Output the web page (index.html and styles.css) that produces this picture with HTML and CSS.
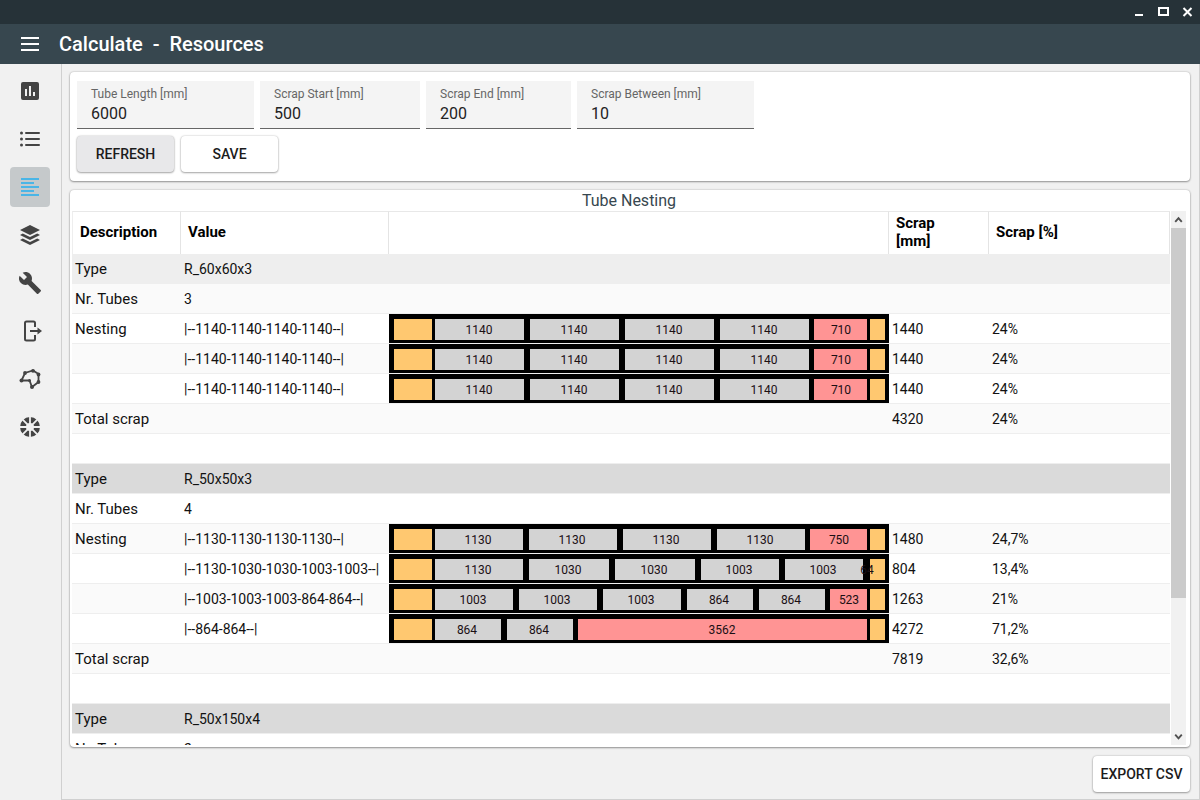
FILE: index.html
```html
<!DOCTYPE html>
<html lang="en">
<head>
<meta charset="utf-8">
<title>Calculate - Resources</title>
<link rel="stylesheet" href="styles.css">
</head>
<body>
<div class="app">
  <div class="titlebar">
    <button class="win-btn" aria-label="Minimize"><svg viewBox="0 0 12 12"><path d="M1 9h8" stroke="#fff" stroke-width="2"/></svg></button>
    <button class="win-btn" aria-label="Maximize"><svg viewBox="0 0 12 12"><path d="M1 2h9v7h-9z" fill="none" stroke="#fff" stroke-width="2"/></svg></button>
    <button class="win-btn" aria-label="Close"><svg viewBox="0 0 12 12"><path d="M1.500 2l8 8M9.500 2l-8 8" stroke="#fff" stroke-width="2"/></svg></button>
  </div>
  <header class="appbar">
    <button class="menu-btn" aria-label="Menu"><svg viewBox="0 0 24 24"><path d="M3 6h18M3 12h18M3 18h18" stroke="#fff" stroke-width="2"/></svg></button>
    <h1 class="page-title">Calculate  -  Resources</h1>
  </header>
  <div class="body">
    <nav class="sidebar">
      <a class="nav-item" href="#charts" aria-label="Charts"><svg viewBox="0 0 24 24"><path fill-rule="evenodd" d="M5 3h14a2 2 0 0 1 2 2v14a2 2 0 0 1-2 2H5a2 2 0 0 1-2-2V5a2 2 0 0 1 2-2zM7 10v7h2v-7zM11 7v10h2V7zM15 13v4h2v-4z"/></svg></a>
      <a class="nav-item" href="#list" aria-label="List"><svg viewBox="0 0 24 24"><path d="M8 6h13M8 12h13M8 18h13" stroke="#444" stroke-width="2" stroke-linecap="round"/><circle cx="3.500" cy="6" r="1.500"/><circle cx="3.500" cy="12" r="1.500"/><circle cx="3.500" cy="18" r="1.500"/></svg></a>
      <a class="nav-item active" href="#resources" aria-label="Resources" aria-current="page"><svg viewBox="0 0 24 24"><path d="M3 4h18M3 8h13M3 12h18M3 16h13M3 20h18" stroke="#4ab5e6" stroke-width="2"/></svg></a>
      <a class="nav-item" href="#layers" aria-label="Layers"><svg viewBox="0 0 24 24"><path d="M12 2l10 5-10 5L2 7zM4.800 10.500L12 14l7.200-3.500L22 12l-10 5-10-5zM4.800 15.500L12 19l7.200-3.500L22 17l-10 5-10-5z"/></svg></a>
      <a class="nav-item" href="#tools" aria-label="Tools"><svg viewBox="0 0 24 24"><path d="M22.700 19l-9.100-9.100c.9-2.300.4-5-1.500-6.900-2-2-5-2.400-7.400-1.300L9 6 6 9 1.600 4.700C.4 7.100.9 10.100 2.900 12.100c1.900 1.900 4.600 2.400 6.900 1.500l9.100 9.100c.4.4 1 .4 1.400 0l2.300-2.300c.5-.4.5-1.100.1-1.400z"/></svg></a>
      <a class="nav-item" href="#export" aria-label="Export"><svg viewBox="0 0 24 24"><path d="M17 8V4a1.500 1.500 0 0 0-1.500-1.500h-7A1.500 1.500 0 0 0 7 4v16a1.500 1.500 0 0 0 1.500 1.500h7A1.500 1.500 0 0 0 17 20v-4M12 12h9" fill="none" stroke="#444" stroke-width="2"/><path d="M19.500 8.500L24 12l-4.500 3.500z"/></svg></a>
      <a class="nav-item" href="#shapes" aria-label="Shapes"><svg viewBox="0 0 24 24"><path d="M3.500 13.500L7 6l8-2.500L20.500 7v8L14 20l-2.500-6.500z" fill="none" stroke="#444" stroke-width="1.800"/><circle cx="3.500" cy="13.500" r="2"/><circle cx="7" cy="6" r="1.900"/><circle cx="15" cy="3.800" r="1.900"/><circle cx="20.500" cy="7.500" r="1.900"/><circle cx="20.500" cy="15" r="1.900"/><circle cx="14" cy="20" r="2"/><circle cx="11.500" cy="13.500" r="1.500"/></svg></a>
      <a class="nav-item" href="#segments" aria-label="Segments"><svg viewBox="0 0 24 24"><circle cx="12" cy="12" r="7" fill="none" stroke="#444" stroke-width="6"/><path d="M12 1v22M1 12h22M4.200 4.200l15.600 15.600M19.800 4.200L4.200 19.800" stroke="#f1f1f1" stroke-width="1.800"/></svg></a>
    </nav>
    <main class="content">
      <form class="card params">
        <div class="fields">
          <div class="field wide"><label for="tube">Tube Length [mm]</label><input id="tube" value="6000"></div>
          <div class="field medium"><label for="start">Scrap Start [mm]</label><input id="start" value="500"></div>
          <div class="field narrow"><label for="end">Scrap End [mm]</label><input id="end" value="200"></div>
          <div class="field wide"><label for="between">Scrap Between [mm]</label><input id="between" value="10"></div>
        </div>
        <div class="actions">
          <button type="button" class="btn pressed">REFRESH</button>
          <button type="button" class="btn">SAVE</button>
        </div>
      </form>
      <section class="card results">
        <h2 class="results-title">Tube Nesting</h2>
        <div class="results-body">
          <div class="table-scroll">
            <table class="nesting">
              <colgroup><col class="col-desc"><col class="col-value"><col class="col-bar"><col class="col-scrap"><col></colgroup>
              <thead><tr><th>Description</th><th>Value</th><th></th><th>Scrap<br>[mm]</th><th>Scrap [%]</th></tr></thead>
              <tbody>
                <tr class="group first"><td>Type</td><td>R_60x60x3</td><td></td><td></td><td></td></tr>
                <tr class="alt"><td>Nr. Tubes</td><td>3</td><td></td><td></td><td></td></tr>
                <tr><td>Nesting</td><td>|--1140-1140-1140-1140--|</td><td class="bar-cell"><svg class="bar" viewBox="0 0 500 29"><rect class="frame" width="500" height="29"/><rect class="end" x="5" y="5" width="38" height="21"/><rect class="piece" x="46" y="5" width="89" height="21"/><rect class="piece" x="141" y="5" width="89" height="21"/><rect class="piece" x="236" y="5" width="89" height="21"/><rect class="piece" x="331" y="5" width="89" height="21"/><rect class="rest" x="425" y="5" width="53" height="21"/><rect class="end" x="481" y="5" width="15" height="21"/><text x="90" y="20">1140</text><text x="185" y="20">1140</text><text x="280" y="20">1140</text><text x="375" y="20">1140</text><text x="452" y="20">710</text></svg></td><td>1440</td><td>24%</td></tr>
                <tr class="alt"><td></td><td>|--1140-1140-1140-1140--|</td><td class="bar-cell"><svg class="bar" viewBox="0 0 500 29"><rect class="frame" width="500" height="29"/><rect class="end" x="5" y="5" width="38" height="21"/><rect class="piece" x="46" y="5" width="89" height="21"/><rect class="piece" x="141" y="5" width="89" height="21"/><rect class="piece" x="236" y="5" width="89" height="21"/><rect class="piece" x="331" y="5" width="89" height="21"/><rect class="rest" x="425" y="5" width="53" height="21"/><rect class="end" x="481" y="5" width="15" height="21"/><text x="90" y="20">1140</text><text x="185" y="20">1140</text><text x="280" y="20">1140</text><text x="375" y="20">1140</text><text x="452" y="20">710</text></svg></td><td>1440</td><td>24%</td></tr>
                <tr><td></td><td>|--1140-1140-1140-1140--|</td><td class="bar-cell"><svg class="bar" viewBox="0 0 500 29"><rect class="frame" width="500" height="29"/><rect class="end" x="5" y="5" width="38" height="21"/><rect class="piece" x="46" y="5" width="89" height="21"/><rect class="piece" x="141" y="5" width="89" height="21"/><rect class="piece" x="236" y="5" width="89" height="21"/><rect class="piece" x="331" y="5" width="89" height="21"/><rect class="rest" x="425" y="5" width="53" height="21"/><rect class="end" x="481" y="5" width="15" height="21"/><text x="90" y="20">1140</text><text x="185" y="20">1140</text><text x="280" y="20">1140</text><text x="375" y="20">1140</text><text x="452" y="20">710</text></svg></td><td>1440</td><td>24%</td></tr>
                <tr class="alt"><td>Total scrap</td><td></td><td></td><td>4320</td><td>24%</td></tr>
                <tr><td></td><td></td><td></td><td></td><td></td></tr>
                <tr class="group"><td>Type</td><td>R_50x50x3</td><td></td><td></td><td></td></tr>
                <tr><td>Nr. Tubes</td><td>4</td><td></td><td></td><td></td></tr>
                <tr class="alt"><td>Nesting</td><td>|--1130-1130-1130-1130--|</td><td class="bar-cell"><svg class="bar" viewBox="0 0 500 29"><rect class="frame" width="500" height="29"/><rect class="end" x="5" y="5" width="38" height="21"/><rect class="piece" x="46" y="5" width="88" height="21"/><rect class="piece" x="140" y="5" width="88" height="21"/><rect class="piece" x="234" y="5" width="88" height="21"/><rect class="piece" x="328" y="5" width="88" height="21"/><rect class="rest" x="421" y="5" width="57" height="21"/><rect class="end" x="481" y="5" width="15" height="21"/><text x="89" y="20">1130</text><text x="183" y="20">1130</text><text x="277" y="20">1130</text><text x="371" y="20">1130</text><text x="450" y="20">750</text></svg></td><td>1480</td><td>24,7%</td></tr>
                <tr><td></td><td>|--1130-1030-1030-1003-1003--|</td><td class="bar-cell"><svg class="bar" viewBox="0 0 500 29"><rect class="frame" width="500" height="29"/><rect class="end" x="5" y="5" width="38" height="21"/><rect class="piece" x="46" y="5" width="88" height="21"/><rect class="piece" x="140" y="5" width="80" height="21"/><rect class="piece" x="226" y="5" width="80" height="21"/><rect class="piece" x="312" y="5" width="78" height="21"/><rect class="piece" x="396" y="5" width="78" height="21"/><rect class="end" x="481" y="5" width="15" height="21"/><text x="89" y="20">1130</text><text x="179" y="20">1030</text><text x="265" y="20">1030</text><text x="350" y="20">1003</text><text x="434" y="20">1003</text><text x="478" y="20">64</text></svg></td><td>804</td><td>13,4%</td></tr>
                <tr class="alt"><td></td><td>|--1003-1003-1003-864-864--|</td><td class="bar-cell"><svg class="bar" viewBox="0 0 500 29"><rect class="frame" width="500" height="29"/><rect class="end" x="5" y="5" width="38" height="21"/><rect class="piece" x="46" y="5" width="78" height="21"/><rect class="piece" x="130" y="5" width="78" height="21"/><rect class="piece" x="214" y="5" width="78" height="21"/><rect class="piece" x="298" y="5" width="66" height="21"/><rect class="piece" x="370" y="5" width="66" height="21"/><rect class="rest" x="441" y="5" width="37" height="21"/><rect class="end" x="481" y="5" width="15" height="21"/><text x="84" y="20">1003</text><text x="168" y="20">1003</text><text x="252" y="20">1003</text><text x="330" y="20">864</text><text x="402" y="20">864</text><text x="460" y="20">523</text></svg></td><td>1263</td><td>21%</td></tr>
                <tr><td></td><td>|--864-864--|</td><td class="bar-cell"><svg class="bar" viewBox="0 0 500 29"><rect class="frame" width="500" height="29"/><rect class="end" x="5" y="5" width="38" height="21"/><rect class="piece" x="46" y="5" width="66" height="21"/><rect class="piece" x="118" y="5" width="66" height="21"/><rect class="rest" x="189" y="5" width="289" height="21"/><rect class="end" x="481" y="5" width="15" height="21"/><text x="78" y="20">864</text><text x="150" y="20">864</text><text x="333" y="20">3562</text></svg></td><td>4272</td><td>71,2%</td></tr>
                <tr class="alt"><td>Total scrap</td><td></td><td></td><td>7819</td><td>32,6%</td></tr>
                <tr><td></td><td></td><td></td><td></td><td></td></tr>
                <tr class="group"><td>Type</td><td>R_50x150x4</td><td></td><td></td><td></td></tr>
                <tr><td>Nr. Tubes</td><td>2</td><td></td><td></td><td></td></tr>
              </tbody>
            </table>
          </div>
          <div class="scrollbar" aria-hidden="true">
            <svg class="arrow" viewBox="0 0 16 16"><path d="M4.500 10.500L8 6.500l3.500 4" fill="none" stroke="#505050" stroke-width="2"/></svg>
            <div class="track"><div class="thumb"></div></div>
            <svg class="arrow" viewBox="0 0 16 16"><path d="M4.500 6L8 10l3.500-4" fill="none" stroke="#505050" stroke-width="2"/></svg>
          </div>
        </div>
      </section>
      <footer class="footer"><button type="button" class="btn">EXPORT CSV</button></footer>
    </main>
  </div>
</div>
</body>
</html>
```
FILE: styles.css
```css
* { box-sizing: border-box; }
body {
  margin: 0;
  font-family: Roboto, "Liberation Sans", sans-serif;
  color: #111;
  background: #f1f1f1;
}
button { font-family: inherit; border: 0; padding: 0; background: none; cursor: pointer; }
svg { display: block; }

.app { display: flex; flex-direction: column; height: 100vh; }

.titlebar {
  display: flex;
  justify-content: flex-end;
  align-items: center;
  gap: 12px;
  height: 24px;
  padding-right: 6px;
  background: #263238;
  flex: none;
}
.win-btn { width: 12px; height: 12px; }
.win-btn svg { overflow: visible; }

.appbar {
  display: flex;
  align-items: center;
  gap: 17px;
  height: 40px;
  padding-left: 18px;
  background: #37474f;
  flex: none;
}
.menu-btn { width: 24px; height: 24px; }
.page-title { margin: 0; font-size: 20px; font-weight: 500; color: #fff; white-space: pre; }

.body { display: flex; flex: 1; min-height: 0; }

.sidebar {
  display: flex;
  flex-direction: column;
  align-items: center;
  gap: 8px;
  width: 62px;
  padding: 7px 1px 0 0;
  border-right: 1px solid #d0d0d0;
  flex: none;
}
.nav-item {
  display: flex;
  align-items: center;
  justify-content: center;
  width: 40px;
  height: 40px;
  border-radius: 4px;
}
.nav-item svg { width: 24px; height: 24px; fill: #444; }
.nav-item.active { background: #c5c9cb; }

.content {
  display: flex;
  flex-direction: column;
  gap: 9px;
  flex: 1;
  min-width: 0;
  padding: 8px 9px 7px 8px;
  border-right: 1px solid #d0d0d0;
  border-bottom: 1px solid #d0d0d0;
}

.card {
  background: #fff;
  border-radius: 4px;
  box-shadow: 0 1px 2px rgba(0, 0, 0, .35), 0 0 2px rgba(0, 0, 0, .25);
}
.params { padding: 9px 7px 9px; flex: none; }
.fields { display: flex; gap: 6px; }
.field {
  display: flex;
  flex-direction: column;
  height: 48px;
  padding: 5px 14px 0;
  background: #f4f4f4;
  border-bottom: 1px solid #666;
}
.field.wide { width: 177px; }
.field.medium { width: 160px; }
.field.narrow { width: 145px; }
.field label { font-size: 12px; line-height: 16px; color: #666; }
.field input {
  width: 100%;
  padding: 0;
  border: 0;
  outline: 0;
  background: none;
  font-family: inherit;
  font-size: 16px;
  line-height: 24px;
  color: #222;
}
.actions { display: flex; gap: 7px; padding-top: 7px; }
.btn {
  width: 97px;
  height: 36px;
  border-radius: 4px;
  background: #fff;
  font-size: 14px;
  font-weight: 500;
  color: #1c1c1c;
  white-space: nowrap;
  box-shadow: 0 1px 2px rgba(0, 0, 0, .3), 0 0 2px rgba(0, 0, 0, .25);
}
.btn.pressed { background: #e8e8ea; }

.results { display: flex; flex-direction: column; flex: 1; min-height: 0; padding: 0 4px 2px 2px; }
.results-title {
  margin: 0;
  font-size: 16px;
  font-weight: 400;
  line-height: 21px;
  text-align: center;
  color: #37474f;
}
.results-body { display: flex; gap: 1px; flex: 1; min-height: 0; }
.table-scroll { flex: 1; min-width: 0; overflow-y: auto; scrollbar-width: none; }

.nesting { width: 100%; table-layout: fixed; border-collapse: separate; border-spacing: 0; font-size: 15px; }
.col-desc { width: 109px; }
.col-value { width: 208px; }
.col-bar { width: 500px; }
.col-scrap { width: 100px; }
.nesting th {
  height: 43px;
  padding: 0 7px 2px;
  border-top: 1px solid #e8e8e8;
  border-right: 1px solid #e4e4e4;
  font-weight: 700;
  line-height: 18px;
  text-align: left;
  color: #000;
}
.nesting th:first-child { border-left: 1px solid #eee; }
.nesting td {
  height: 30px;
  padding: 0 3px;
  border-bottom: 1px solid #eee;
  font-size: 14px;
  line-height: 18px;
  white-space: nowrap;
}
.nesting td:first-child { font-size: 15px; }
.nesting .alt td { background: #fafafa; }
.nesting .group td { background: #dadada; }
.nesting .group.first td { background: #eee; }
.nesting td.bar-cell { padding: 0; }
.bar { width: 100%; height: 29px; }
.bar text { font-size: 12px; text-anchor: middle; fill: #1a0f14; }
.bar .frame { fill: #000; }
.bar .piece { fill: #d3d3d3; }
.bar .end { fill: #ffc870; }
.bar .rest { fill: #ff9494; }

.scrollbar { display: flex; flex-direction: column; width: 15px; background: #f1f1f1; }
.arrow { width: 15px; height: 17px; flex: none; }
.track { flex: 1; }
.thumb { height: 74%; background: #cbcbcb; }

.footer { display: flex; justify-content: flex-end; flex: none; }
```
